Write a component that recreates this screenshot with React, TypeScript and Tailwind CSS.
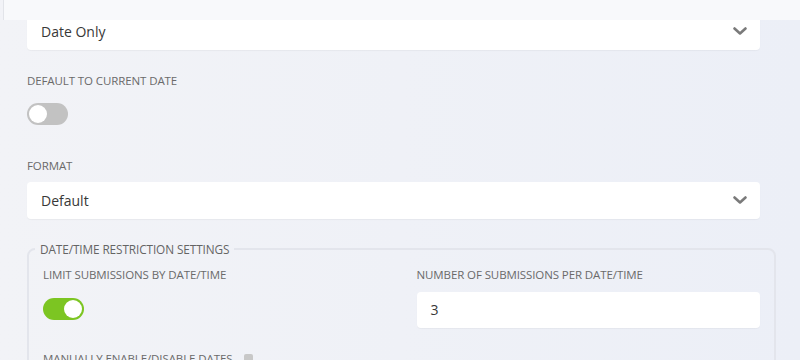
import React from "react";

function Chevron() {
  return (
    <svg width="14" height="9" viewBox="0 0 14 9" className="shrink-0">
      <polyline points="1.5,1.5 7,6.5 12.5,1.5" fill="none" stroke="#7a7a7a" strokeWidth="2.6" strokeLinecap="round" strokeLinejoin="round" />
    </svg>
  );
}

function Label({ children }: { children: React.ReactNode }) {
  return (
    <div className="text-[11.5px] leading-[16px] font-medium uppercase text-[#6a6a6a] tracking-[-0.1px]">{children}</div>
  );
}

function Toggle({ on }: { on: boolean }) {
  return (
    <div
      className={
        "w-[41px] h-[22px] rounded-full flex items-center px-[2px] " +
        (on ? "bg-[#7cc522] justify-end" : "bg-[#c2c2c2] justify-start")
      }
    >
      <div className="w-[18px] h-[18px] rounded-full bg-white" />
    </div>
  );
}

export default function App() {
  return (
    <div
      className="w-[800px] h-[360px] overflow-hidden bg-gradient-to-r from-[#f2f3f7] to-[#eceff7] text-[#383838]"
      style={{ fontFamily: '"Open Sans", "Liberation Sans", sans-serif' }}
    >
      <div className="relative z-10 h-[20px] ml-[3px] bg-[#f8f9fb] border-l border-[#e2e4e9]" />
      <div className="pl-[27px]">
        <div className="-mt-[7px] w-[733px] h-[37px] bg-white rounded-[4px] shadow-[0_1px_1px_rgba(0,0,0,0.04)] flex items-center justify-between pl-[14px] pr-[13px]">
          <span className="text-[14px] leading-[20px]">Date Only</span>
          <Chevron />
        </div>

        <div className="mt-[23px]">
          <Label>Default to current date</Label>
        </div>
        <div className="mt-[14px]">
          <Toggle on={false} />
        </div>

        <div className="mt-[33px]">
          <Label>Format</Label>
        </div>
        <div className="mt-[8px] w-[733px] h-[37px] bg-white rounded-[4px] shadow-[0_1px_1px_rgba(0,0,0,0.04)] flex items-center justify-between pl-[14px] pr-[13px]">
          <span className="text-[14px] leading-[20px]">Default</span>
          <Chevron />
        </div>

        <fieldset className="mt-[22px] w-[749px] border-2 border-[#e3e5ec] rounded-[8px] px-[14px] pt-[10px] pb-[10px]">
          <legend className="-ml-[8px] px-[5px] text-[11.8px] leading-[16px] font-medium uppercase text-[#646464] tracking-[-0.1px]">
            Date/Time Restriction Settings
          </legend>
          <div className="grid grid-cols-2 gap-x-[30px]">
            <div>
              <Label>Limit submissions by date/time</Label>
              <div className="mt-[15px]">
                <Toggle on={true} />
              </div>
            </div>
            <div>
              <Label>Number of submissions per date/time</Label>
              <div className="mt-[9px] h-[36px] bg-white rounded-[4px] shadow-[0_1px_1px_rgba(0,0,0,0.04)] flex items-center pl-[14px]">
                <span className="text-[14px] leading-[20px]">3</span>
              </div>
            </div>
          </div>
          <div className="mt-[23px] flex items-center gap-[12px]">
            <Label>Manually enable/disable dates</Label>
            <div className="w-[9px] h-[10px] rounded-[2px] bg-[#c8c8c8]" />
          </div>
        </fieldset>
      </div>
    </div>
  );
}
